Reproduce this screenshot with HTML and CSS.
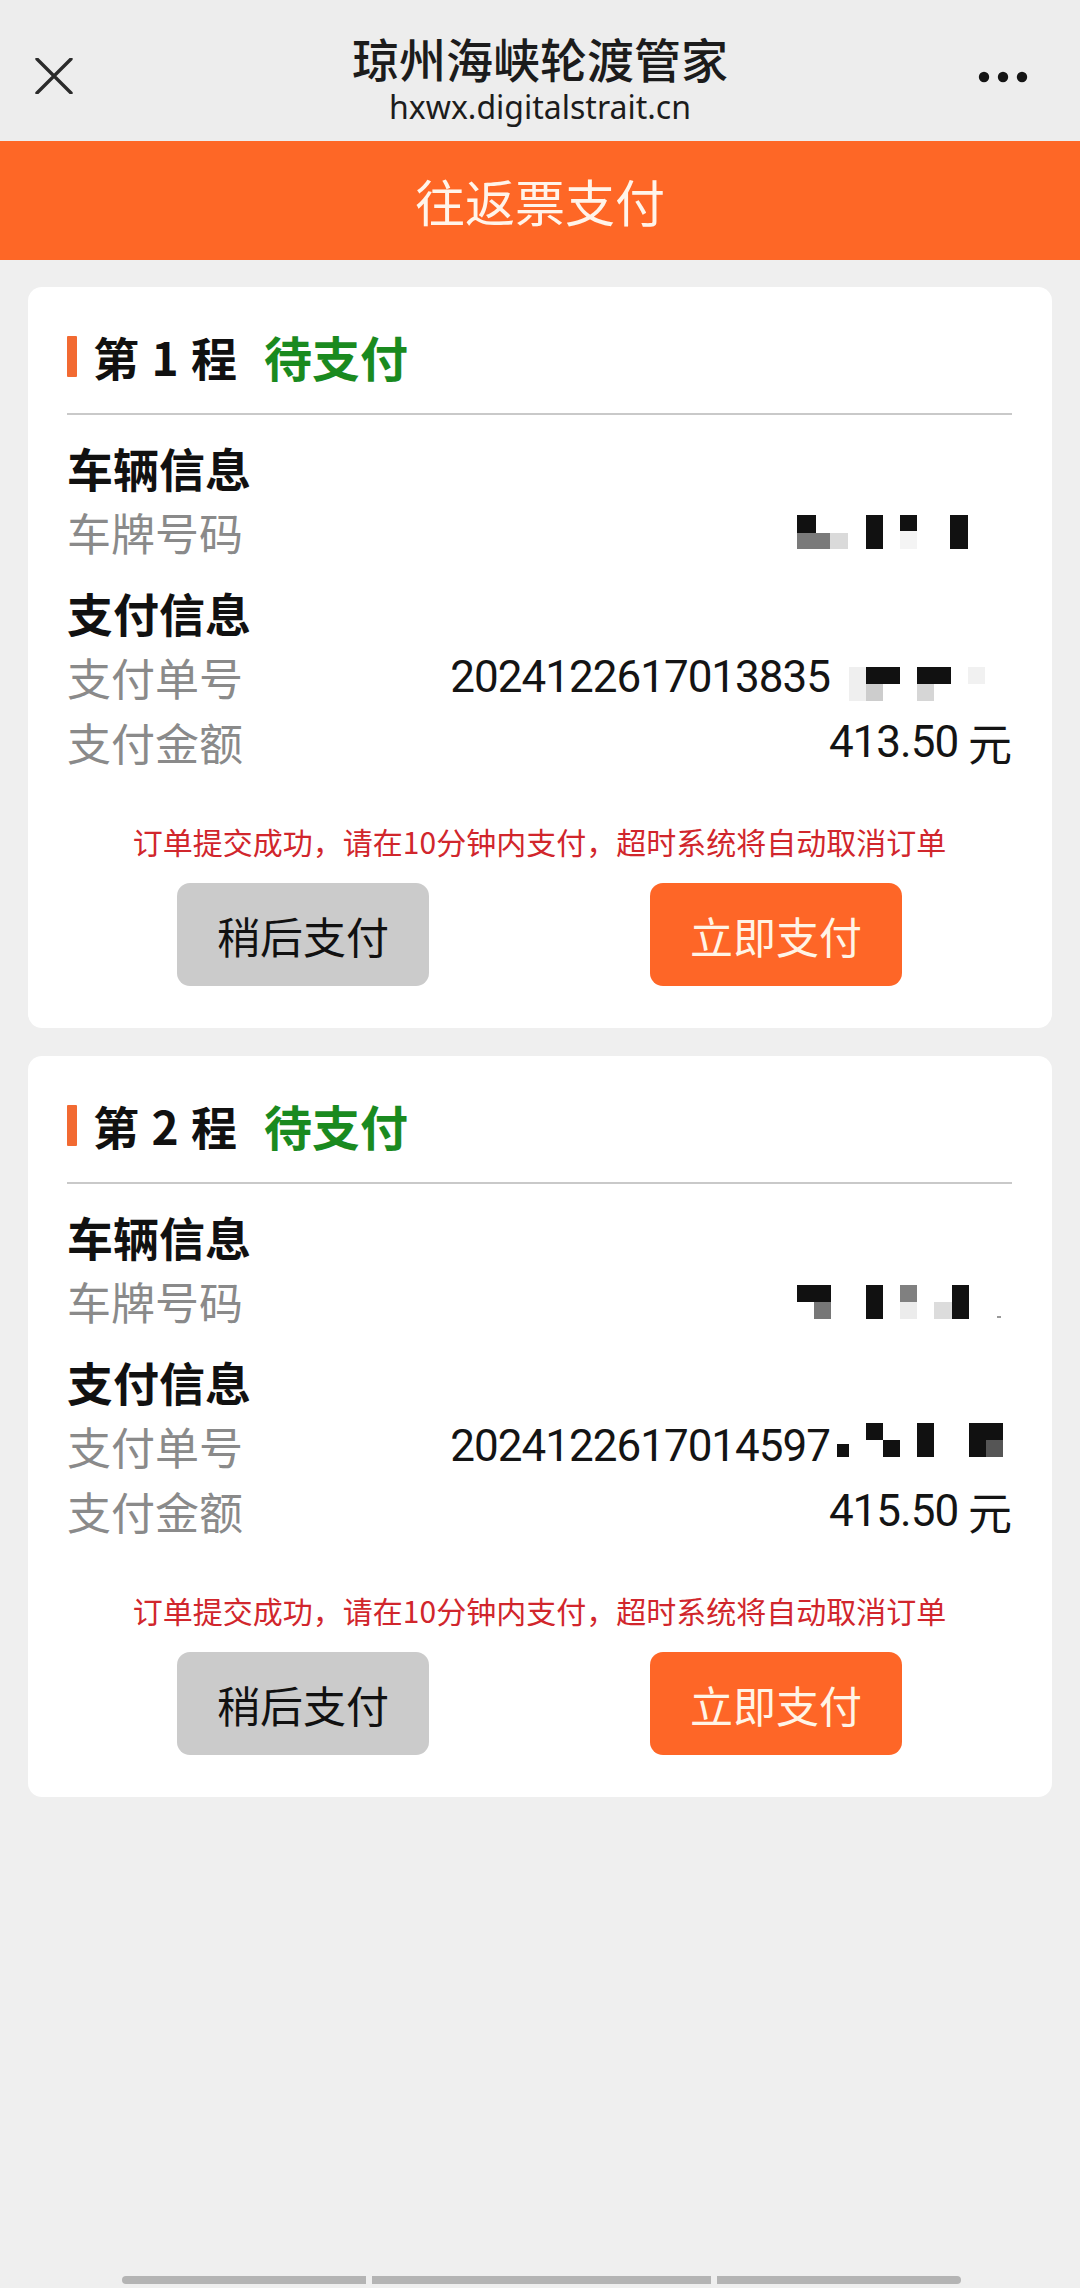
FILE: index.html
```html
<!DOCTYPE html>
<html lang="zh-CN">
<head>
<meta charset="utf-8">
<title>往返票支付</title>
<link rel="stylesheet" href="styles.css">
</head>
<body>
<header class="topbar">
  <div class="close">
    <svg width="38" height="36" viewBox="0 0 38 36"><path d="M2 1 L36 35 M36 1 L2 35" stroke="#2b2b2b" stroke-width="3.4" stroke-linecap="round" fill="none"/></svg>
  </div>
  <div class="titles">
    <div class="t1">琼州海峡轮渡管家</div>
    <div class="t2">hxwx.digitalstrait.cn</div>
  </div>
  <div class="more">
    <svg width="50" height="12" viewBox="0 0 50 12"><circle cx="6" cy="6" r="5.2" fill="#151515"/><circle cx="25" cy="6" r="5.2" fill="#151515"/><circle cx="44" cy="6" r="5.2" fill="#151515"/></svg>
  </div>
</header>
<div class="pagehead">往返票支付</div>

<main class="list">
  <section class="card">
    <div class="card-title"><span class="bar"></span><span class="leg">第 1 程</span><span class="status">待支付</span></div>
    <div class="divider"></div>
    <div class="info">
      <div class="sec">车辆信息</div>
      <div class="row"><span class="label">车牌号码</span>
        <span class="value"><svg class="mosaic" width="215" height="65" viewBox="0 0 215 65">
          <rect x="0" y="15" width="19" height="18" fill="#111"/>
          <rect x="0" y="33" width="33" height="16" fill="#7a7a7a"/>
          <rect x="33" y="33" width="18" height="16" fill="#dadada"/>
          <rect x="69" y="15" width="17" height="34" fill="#111"/>
          <rect x="103" y="15" width="17" height="16" fill="#111"/>
          <rect x="103" y="31" width="17" height="18" fill="#f4f4f4"/>
          <rect x="153" y="15" width="18" height="34" fill="#111"/>
        </svg></span></div>
      <div class="sec gap">支付信息</div>
      <div class="row"><span class="label">支付单号</span>
        <span class="value"><span class="num">2024122617013835</span><svg class="mosaic" width="182" height="65" viewBox="0 0 182 65">
          <rect x="19" y="22" width="17" height="34" fill="#efefef"/>
          <rect x="36" y="22" width="34" height="17" fill="#111"/>
          <rect x="36" y="39" width="17" height="17" fill="#cdcdcd"/>
          <rect x="87" y="22" width="34" height="17" fill="#111"/>
          <rect x="87" y="39" width="17" height="17" fill="#d6d6d6"/>
          <rect x="138" y="22" width="17" height="17" fill="#f1f1f1"/>
        </svg></span></div>
      <div class="row"><span class="label">支付金额</span><span class="value"><span class="num">413.50</span>&nbsp;元</span></div>
    </div>
    <p class="warn">订单提交成功，请在10分钟内支付，超时系统将自动取消订单</p>
    <div class="actions">
      <button class="btn later">稍后支付</button>
      <button class="btn pay">立即支付</button>
    </div>
  </section>

  <section class="card">
    <div class="card-title"><span class="bar"></span><span class="leg">第 2 程</span><span class="status">待支付</span></div>
    <div class="divider"></div>
    <div class="info">
      <div class="sec">车辆信息</div>
      <div class="row"><span class="label">车牌号码</span>
        <span class="value"><svg class="mosaic" width="215" height="65" viewBox="0 0 215 65">
          <rect x="0" y="16" width="34" height="17" fill="#111"/>
          <rect x="17" y="33" width="17" height="17" fill="#777"/>
          <rect x="69" y="16" width="17" height="34" fill="#111"/>
          <rect x="103" y="16" width="17" height="17" fill="#808080"/>
          <rect x="103" y="33" width="17" height="17" fill="#ececec"/>
          <rect x="137" y="33" width="18" height="17" fill="#dcdcdc"/>
          <rect x="155" y="16" width="17" height="34" fill="#111"/>
          <rect x="200" y="47" width="4" height="2" fill="#999"/>
        </svg></span></div>
      <div class="sec gap">支付信息</div>
      <div class="row"><span class="label">支付单号</span>
        <span class="value"><span class="num">2024122617014597</span><svg class="mosaic" width="182" height="65" viewBox="0 0 182 65">
          <rect x="0" y="9" width="7" height="34" fill="#fff"/>
          <rect x="7" y="30" width="12" height="13" fill="#111"/>
          <rect x="36" y="9" width="17" height="17" fill="#111"/>
          <rect x="53" y="26" width="17" height="17" fill="#111"/>
          <rect x="87" y="9" width="17" height="34" fill="#111"/>
          <rect x="139" y="9" width="34" height="34" fill="#111"/>
          <rect x="156" y="26" width="17" height="17" fill="#555"/>
        </svg></span></div>
      <div class="row"><span class="label">支付金额</span><span class="value"><span class="num">415.50</span>&nbsp;元</span></div>
    </div>
    <p class="warn">订单提交成功，请在10分钟内支付，超时系统将自动取消订单</p>
    <div class="actions">
      <button class="btn later">稍后支付</button>
      <button class="btn pay">立即支付</button>
    </div>
  </section>
</main>

<footer class="homebar">
  <span class="seg s1"></span><span class="seg s2"></span><span class="seg s3"></span>
</footer>
</body>
</html>
```

FILE: styles.css
```css
* { box-sizing: border-box; }
html, body { margin: 0; padding: 0; }
body {
  width: 1080px;
  height: 2288px;
  overflow: hidden;
  background: #efefef;
  font-family: "Noto Sans CJK SC", "Noto Sans", sans-serif;
  color: #111;
  display: flex;
  flex-direction: column;
}

.topbar {
  height: 141px;
  display: grid;
  grid-template-columns: 1fr auto 1fr;
  align-items: start;
  background: #ededed;
}
.close {
  justify-self: start;
  margin: 58px 0 0 35px;
  line-height: 0;
}
.more {
  justify-self: end;
  margin: 71px 52px 0 0;
  line-height: 0;
}
.titles {
  padding-top: 33px;
  text-align: center;
}
.t1 {
  font-size: 47px;
  line-height: 50px;
  font-weight: 500;
  color: #1c1c1c;
}
.t2 {
  margin-top: 4px;
  font-family: "Noto Sans", "Open Sans", sans-serif;
  font-size: 32px;
  line-height: 40px;
  color: #1c1c1c;
}

.pagehead {
  height: 119px;
  background: #fe6726;
  color: #fff4ea;
  font-size: 50px;
  line-height: 119px;
  text-align: center;
}

.list {
  flex: 1;
  padding: 27px 28px 0;
  display: flex;
  flex-direction: column;
  gap: 28px;
}
.card {
  background: #fff;
  border-radius: 14px;
  padding: 0 40px 42px 39px;
}
.card-title {
  padding-top: 45px;
  height: 93px;
  display: flex;
  align-items: center;
}
.bar {
  width: 10px;
  height: 41px;
  background: #f26a32;
  border-radius: 1px;
  margin-right: 16px;
}
.leg {
  font-size: 46px;
  line-height: 48px;
  font-weight: 700;
  letter-spacing: 1px;
  color: #111;
}
.status {
  font-size: 48px;
  line-height: 48px;
  font-weight: 700;
  color: #1a8a1f;
  margin-left: 26px;
}
.divider {
  margin-top: 33px;
  height: 2px;
  background: #c9c9c9;
}
.info { padding-top: 20px; }
.sec {
  font-size: 46px;
  line-height: 65px;
  font-weight: 700;
  color: #111;
}
.sec.gap { margin-top: 15px; }
.row {
  display: flex;
  justify-content: space-between;
  align-items: center;
  height: 65px;
}
.label {
  font-size: 44px;
  line-height: 65px;
  color: #8a8a8a;
}
.value {
  display: flex;
  align-items: center;
  font-size: 44px;
  line-height: 65px;
  color: #141414;
}
.num {
  font-family: Roboto, "Noto Sans", sans-serif;
  font-size: 44px;
  letter-spacing: -1px;
}
.mosaic { display: block; }

.warn {
  margin: 46px 0 0;
  text-align: center;
  font-size: 30px;
  line-height: 40px;
  color: #d1262c;
}
.actions {
  margin-top: 22px;
  display: flex;
  justify-content: center;
  gap: 221px;
}
.btn {
  width: 252px;
  height: 103px;
  border: none;
  border-radius: 13px;
  font-family: "Noto Sans CJK SC", "Noto Sans", sans-serif;
  font-size: 43px;
  padding: 0;
}
.later { background: #cbcbcb; color: #111; }
.pay { background: #fe6627; color: #fff4e6; }

.homebar {
  height: 12px;
  display: flex;
  justify-content: center;
  align-items: flex-start;
  gap: 6px;
  padding-left: 2px;
}
.seg {
  height: 8px;
  background: #b4b4b4;
}
.s1 { width: 244px; border-radius: 4px 0 0 4px; }
.s2 { width: 339px; }
.s3 { width: 244px; border-radius: 0 4px 4px 0; }
```
